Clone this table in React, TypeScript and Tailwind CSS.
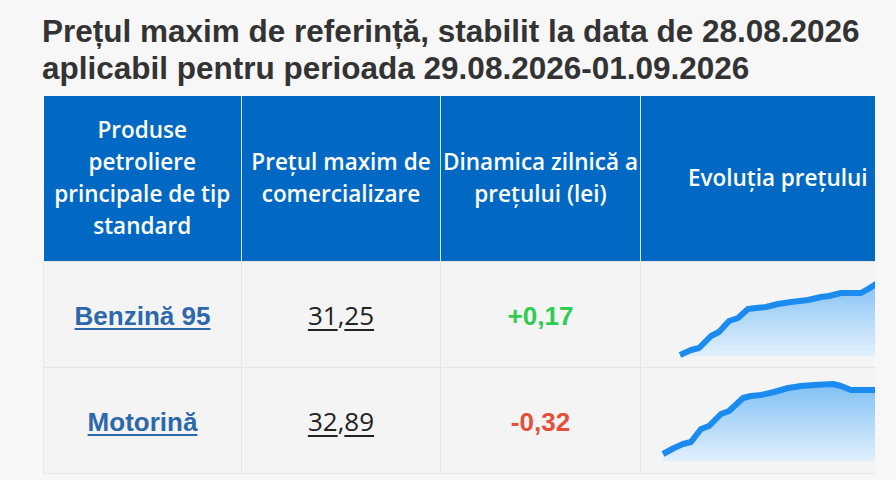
const rows = [
  {
    name: 'Benzină 95',
    price: ['31', '25'],
    delta: '+0,17',
    up: true,
    points: [
      [39, 93], [50, 88], [58, 86], [70, 74], [78, 70], [88, 59], [97, 56], [107, 47], [115, 46],
      [125, 45], [137, 42], [150, 40], [167, 38], [180, 35], [188, 34], [200, 31], [220, 31],
      [227, 27], [235, 22], [245, 16],
    ],
    base: 94,
  },
  {
    name: 'Motorină',
    price: ['32', '89'],
    delta: '-0,32',
    up: false,
    points: [
      [22, 86], [33, 80], [42, 76], [50, 74], [60, 61], [68, 58], [80, 46], [88, 43], [102, 30],
      [110, 28], [120, 27], [133, 24], [147, 20], [160, 18], [173, 17], [192, 16], [200, 18],
      [210, 22], [235, 22], [274, 22],
    ],
    base: 93,
  },
];

function Sparkline({ points, base, id }: { points: number[][]; base: number; id: string }) {
  const line = points.map((p) => p.join(',')).join(' ');
  const first = points[0];
  const last = points[points.length - 1];
  const area = `M${first[0]},${base} L${line.replace(/ /g, ' L')} L${last[0]},${base} Z`;
  return (
    <svg width="274" height="105" viewBox="0 0 274 105" className="block">
      <defs>
        <linearGradient id={id} x1="0" y1="0" x2="0" y2="1">
          <stop offset="0%" stopColor="#7fc0f4" />
          <stop offset="100%" stopColor="#e2f0fc" />
        </linearGradient>
      </defs>
      <path d={area} fill={`url(#${id})`} />
      <polyline points={line} fill="none" stroke="#1b8bef" strokeWidth="6" strokeLinejoin="round" strokeLinecap="butt" />
    </svg>
  );
}

export default function App() {
  return (
    <div className="w-[896px] h-[480px] overflow-hidden bg-[#f7f7f7]">
      {/* Title */}
      <h1 className="pl-[42px] pt-[13px] text-[31.5px] leading-[37px] font-bold text-[#333333] font-['Liberation_Sans',Arial,sans-serif]">
        Prețul maxim de referință, stabilit la data de 28.08.2026
        <br />
        aplicabil pentru perioada 29.08.2026-01.09.2026
      </h1>

      {/* Table */}
      <div className="ml-[43px] mt-[9px] w-[832px] overflow-hidden">
        <table className="table-fixed border-collapse w-[871px]">
          <colgroup>
            <col className="w-[198px]" />
            <col className="w-[199px]" />
            <col className="w-[200px]" />
            <col className="w-[274px]" />
          </colgroup>
          <thead>
            <tr className="h-[165px] bg-[#0169c4] text-white text-[22.5px] leading-[32px] font-semibold font-['Open_Sans',sans-serif] whitespace-nowrap">
              <th className="px-0 border-r border-[#d8e6f5] font-semibold">
                Produse
                <br />
                petroliere
                <br />
                principale de tip
                <br />
                standard
              </th>
              <th className="px-0 border-r border-[#d8e6f5] font-semibold">
                Prețul maxim de
                <br />
                comercializare
              </th>
              <th className="px-0 border-r border-[#d8e6f5] font-semibold">
                Dinamica zilnică a
                <br />
                prețului (lei)
              </th>
              <th className="px-1 font-semibold">Evoluția prețului</th>
            </tr>
          </thead>
          <tbody>
            {rows.map((r, i) => (
              <tr key={r.name} className="h-[106px] bg-[#f4f4f4]">
                <td className="border border-[#e6e6e6] text-center pt-[4px]">
                  <a href="#" className="text-[26px] font-bold text-[#2d68ad] underline decoration-2 underline-offset-[3px] font-['Liberation_Sans',Arial,sans-serif]">
                    {r.name}
                  </a>
                </td>
                <td className="border border-[#e6e6e6] text-center text-[26px] text-[#222222] font-['Open_Sans',sans-serif] pt-[2px]">
                  <span className="underline underline-offset-[4px]">{r.price[0]}</span>,
                  <span className="underline underline-offset-[4px]">{r.price[1]}</span>
                </td>
                <td
                  className={`border border-[#e6e6e6] text-center text-[26px] font-bold pt-[4px] font-['Liberation_Sans',Arial,sans-serif] ${
                    r.up ? 'text-[#2fcc52]' : 'text-[#e5503a]'
                  }`}
                >
                  {r.delta}
                </td>
                <td className="border border-[#e6e6e6] p-0 align-top">
                  <Sparkline points={r.points} base={r.base} id={`grad${i}`} />
                </td>
              </tr>
            ))}
          </tbody>
        </table>
      </div>
    </div>
  );
}
